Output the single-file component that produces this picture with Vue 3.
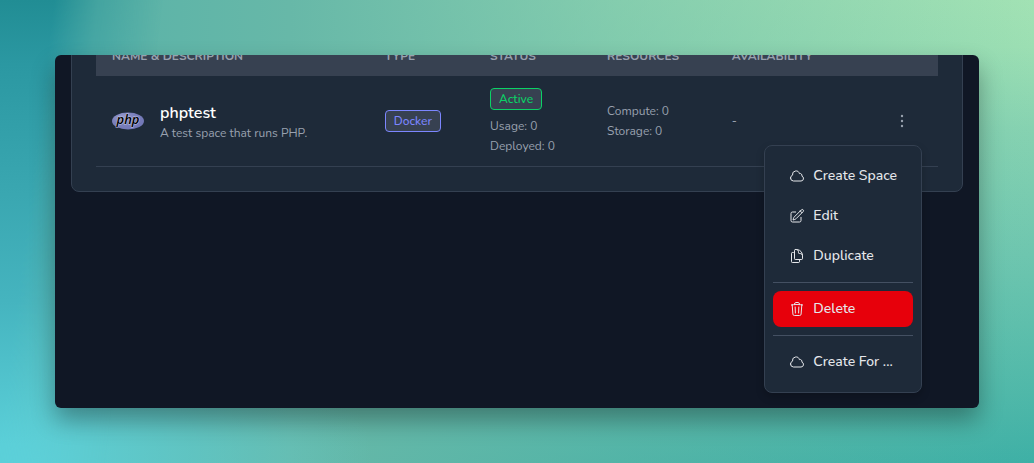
<script setup>
const columns = ['Name & Description', 'Type', 'Status', 'Resources', 'Availability']

const cloud = 'M2.25 15a4.5 4.5 0 0 0 4.5 4.5H18a3.75 3.75 0 0 0 1.332-7.257 3 3 0 0 0-3.758-3.848 5.25 5.25 0 0 0-10.233 2.33A4.502 4.502 0 0 0 2.25 15Z'
const pencil = 'm16.862 4.487 1.687-1.688a1.875 1.875 0 1 1 2.652 2.652L10.582 16.07a4.5 4.5 0 0 1-1.897 1.13L6 18l.8-2.685a4.5 4.5 0 0 1 1.13-1.897l8.932-8.931Zm0 0L19.5 7.125M18 14v4.75A2.25 2.25 0 0 1 15.75 21H5.25A2.25 2.25 0 0 1 3 18.75V8.25A2.25 2.25 0 0 1 5.25 6H10'
const copy = 'M15.75 17.25v3.375c0 .621-.504 1.125-1.125 1.125h-9.75a1.125 1.125 0 0 1-1.125-1.125V7.875c0-.621.504-1.125 1.125-1.125H6.75a9.06 9.06 0 0 1 1.5.124m7.5 10.376h3.375c.621 0 1.125-.504 1.125-1.125V11.25c0-4.46-3.243-8.161-7.5-8.876a9.06 9.06 0 0 0-1.5-.124H9.375c-.621 0-1.125.504-1.125 1.125v3.5m7.5 10.375H9.375a1.125 1.125 0 0 1-1.125-1.125v-9.25m12 6.625v-1.875a3.375 3.375 0 0 0-3.375-3.375h-1.5a1.125 1.125 0 0 1-1.125-1.125v-1.5a3.375 3.375 0 0 0-3.375-3.375H9.75'
const trash = 'm14.74 9-.346 9m-4.788 0L9.26 9m9.968-3.21c.342.052.682.107 1.022.166m-1.022-.165L18.16 19.673a2.25 2.25 0 0 1-2.244 2.077H8.084a2.25 2.25 0 0 1-2.244-2.077L4.772 5.79m14.456 0a48.108 48.108 0 0 0-3.478-.397m-12 .562c.34-.059.68-.114 1.022-.165m0 0a48.11 48.11 0 0 1 3.478-.397m7.5 0v-.916c0-1.18-.91-2.164-2.09-2.201a51.964 51.964 0 0 0-3.32 0c-1.18.037-2.09 1.022-2.09 2.201v.916m7.5 0a48.667 48.667 0 0 0-7.5 0'

const menu = [
  { label: 'Create Space', icon: cloud },
  { label: 'Edit', icon: pencil },
  { label: 'Duplicate', icon: copy },
  { label: 'Delete', icon: trash, danger: true },
  { label: 'Create For ...', icon: cloud },
]
</script>

<template>
  <div class="backdrop">
    <main class="window">
      <section class="card">
        <table>
          <colgroup>
            <col class="c-name" /><col class="c-type" /><col class="c-status" />
            <col class="c-resources" /><col class="c-availability" /><col />
          </colgroup>
          <thead>
            <tr>
              <th v-for="c in columns" :key="c" scope="col">{{ c }}</th>
              <td></td>
            </tr>
          </thead>
          <tbody>
            <tr>
              <td>
                <div class="space">
                  <svg class="logo" viewBox="0 0 32 18" role="img" aria-label="PHP logo">
                    <defs>
                      <radialGradient id="php-fill" cx="35%" cy="30%" r="75%">
                        <stop offset="0" stop-color="#9a9ed0" />
                        <stop offset="0.5" stop-color="#7b80bb" />
                        <stop offset="1" stop-color="#7076b6" />
                      </radialGradient>
                    </defs>
                    <ellipse cx="16" cy="9" rx="16" ry="8.5" fill="url(#php-fill)" />
                    <text x="16" y="12" text-anchor="middle">php</text>
                  </svg>
                  <div class="about">
                    <div class="name">phptest</div>
                    <div class="line">A test space that runs PHP.</div>
                  </div>
                </div>
              </td>
              <td><span class="badge docker">Docker</span></td>
              <td class="status">
                <span class="badge active">Active</span>
                <div class="line">Usage: 0</div>
                <div class="line">Deployed: 0</div>
              </td>
              <td>
                <div class="line">Compute: 0</div>
                <div class="line">Storage: 0</div>
              </td>
              <td><div class="line">-</div></td>
              <td>
                <div class="actions">
                  <button class="more" type="button" aria-label="Actions" aria-expanded="true">
                    <svg viewBox="0 0 16 16" fill="currentColor">
                      <circle cx="8" cy="3" r="1.2" /><circle cx="8" cy="8" r="1.2" /><circle cx="8" cy="13" r="1.2" />
                    </svg>
                  </button>
                  <ul class="menu">
                    <li v-for="item in menu" :key="item.label" :class="{ divided: item.danger }">
                      <button type="button" :class="{ danger: item.danger }">
                        <svg viewBox="0 0 24 24" fill="none" stroke="currentColor" stroke-width="1.5" stroke-linecap="round" stroke-linejoin="round">
                          <path :d="item.icon" />
                        </svg>
                        {{ item.label }}
                      </button>
                    </li>
                  </ul>
                </div>
              </td>
            </tr>
          </tbody>
        </table>
      </section>
    </main>
  </div>
</template>

<style>
body {
  margin: 0;
}
</style>

<style scoped>
.backdrop {
  position: relative;
  box-sizing: border-box;
  min-height: 100vh;
  padding: 55px;
  display: flex;
  font-family: Nunito, "Noto Sans", sans-serif;
  background:
    radial-gradient(ellipse 36% 45% at 0% 100%, #5fd3dc 0%, #5fd3dc00 100%),
    linear-gradient(90deg, #5bb3a8 10%, #67b8a8 28%, #67b8a880 60%, #67b8a800 100%),
    linear-gradient(180deg, #a2e2b4 0%, #9cdfb3 10%, #86d2b1 28%, #6ec6af 55%, #4fb8a9 85%, #3eb0a6 100%);
}
.backdrop::before {
  content: "";
  position: absolute;
  inset: 0;
  background: linear-gradient(180deg, #218d94 0%, #2b98a2 14%, #3aa7b1 42%, #45b4bf 65%, #5bcfd8 96%);
  mask-image: linear-gradient(97deg, #000 5%, #0006 9%, #0000 15%);
}
.window {
  position: relative;
  flex: 1;
  min-width: 0;
  overflow: hidden;
  border-radius: 6px;
  background: #101725;
  box-shadow: 0 12px 24px #0005;
}
.card {
  margin: -44px 16px 0;
  padding: 24px;
  border: 1px solid #344051;
  border-radius: 8px;
  background: #1e2a39;
}
table {
  width: 100%;
  table-layout: fixed;
  border-collapse: separate;
  border-spacing: 0;
  color: #99a1af;
}
.c-name { width: 32.4%; }
.c-type { width: 12.5%; }
.c-status { width: 13.9%; }
.c-resources { width: 14.8%; }
.c-availability { width: 16%; }
thead th,
thead td {
  padding: 12px 16px;
  background: #374151;
  text-align: left;
  text-transform: uppercase;
  font-size: 12px;
  line-height: 16px;
  font-weight: 700;
  white-space: nowrap;
}
tbody td {
  padding: 10px 16px;
  border-bottom: 1px solid #344051;
  vertical-align: middle;
}
tbody td.status {
  padding-top: 12px;
}
.space {
  display: flex;
  align-items: center;
  gap: 16px;
}
.logo {
  width: 32px;
  height: 18px;
  flex: none;
}
.logo text {
  font: italic 600 13px "Open Sans", sans-serif;
  fill: #000;
  stroke: #c5c7e6;
  stroke-width: 1px;
  paint-order: stroke;
}
.about {
  padding-top: 4px;
}
.name {
  color: #fff;
  font-size: 16px;
  line-height: 20px;
  font-weight: 600;
}
.line {
  font-size: 12px;
  line-height: 20px;
}
.badge {
  display: block;
  width: fit-content;
  padding: 0 8px;
  border: 1px solid;
  border-radius: 4px;
  background: #374151;
  font-size: 12px;
  line-height: 20px;
  font-weight: 500;
}
.docker { color: #7c86ff; }
.active {
  color: #0bd266;
  margin-bottom: 6px;
}
.actions {
  position: relative;
  display: flex;
  justify-content: flex-end;
}
button {
  font: inherit;
  border: 0;
  background: none;
  cursor: pointer;
}
.more {
  width: 40px;
  height: 40px;
  padding: 12px;
  color: #99a1af;
}
.more svg {
  display: block;
  width: 16px;
  height: 16px;
}
.menu {
  position: absolute;
  top: 44px;
  right: 0;
  box-sizing: border-box;
  min-width: 157px;
  margin: 0;
  padding: 12px 8px;
  display: flex;
  flex-direction: column;
  gap: 4px;
  list-style: none;
  border: 1px solid #344051;
  border-radius: 8px;
  background: #1e2a39;
  box-shadow: 0 4px 8px #0003;
}
.menu li.divided {
  margin: 4px 0;
  padding: 8px 0;
  border: solid #445062;
  border-width: 1px 0;
}
.menu button {
  display: flex;
  align-items: center;
  gap: 8px;
  width: 100%;
  padding: 8px 16px;
  border-radius: 8px;
  color: #e5e7eb;
  font-size: 14px;
  line-height: 20px;
  font-weight: 500;
  white-space: nowrap;
}
.menu button.danger {
  background: #e7000b;
}
.menu svg {
  width: 16px;
  height: 16px;
  flex: none;
}
</style>
